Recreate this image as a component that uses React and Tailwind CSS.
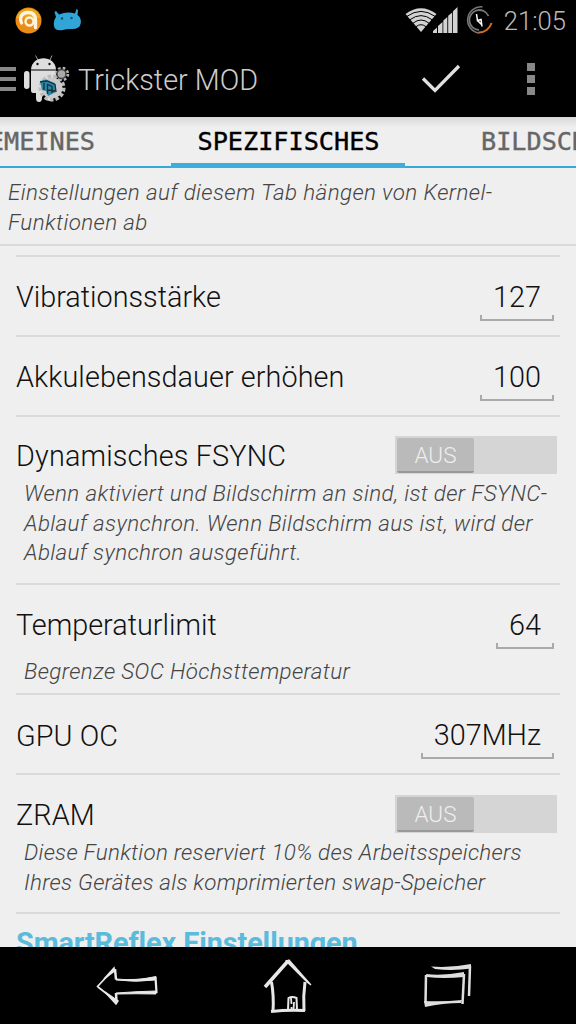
import React from "react";

const WifiIcon = () => (
  <svg width="32" height="26" viewBox="0 0 32 26">
    <path d="M0.500 7 Q16 -4.500 31.500 7 L16 25 Z" fill="#d2d2d2" />
    <path d="M2 9.300 Q16 -0.500 30 9.300 M5 12.700 Q16 4.500 27 12.700 M8 16.200 Q16 9.800 24 16.200 M11 19.700 Q16 15.700 21 19.700" fill="none" stroke="#000" strokeWidth="1" />
  </svg>
);

const SignalIcon = () => (
  <svg width="25" height="27" viewBox="0 0 25 27">
    <path d="M0 26 V24 L4 20.500 V26 Z M5 26 V19 L9.500 15 V26 Z M10.300 26 V13.500 L14.300 10 V26 Z M15.200 26 V8.800 L19.200 5.500 V26 Z M20 26 V4.300 L24.500 0 V26 Z" fill="#d2d2d2" />
  </svg>
);

const BatteryIcon = () => (
  <svg width="30" height="30" viewBox="0 0 30 30" fill="none">
    <path d="M18.500 2 A13 13 0 1 0 15 28" stroke="#777" strokeWidth="1.500" />
    <path d="M24.500 11 A10 10 0 1 0 15 25" stroke="#777" strokeWidth="1.800" />
    <path d="M14.500 27.500 A13 13 0 0 0 27.500 18" stroke="#d06e25" strokeWidth="2" />
    <path d="M12.500 9 L13.500 15.500 L17 14.500 L18 21.500 M13 15 L18 20" stroke="#fff" strokeWidth="1.500" />
  </svg>
);

const AvastIcon = () => (
  <svg width="27" height="27" viewBox="0 0 27 27" fill="none">
    <circle cx="13.500" cy="13.500" r="13" fill="#ea8c16" />
    <path d="M1 11 A13 13 0 0 1 26 11 Z" fill="#eba81c" />
    <path d="M6.500 16 C3.500 8 9 5.500 13 5.500 C18 5.500 20.500 8.500 20.500 13 V20.500" stroke="#fff4dc" strokeWidth="3.400" strokeLinecap="round" />
    <circle cx="14.500" cy="14.500" r="4" stroke="#fff4dc" strokeWidth="2.400" />
  </svg>
);

const DroidHead = () => (
  <svg width="30" height="22" viewBox="0 0 30 22">
    <path d="M3 8 L1.500 3 L3 2 L6 5.500 Q14 2 22 4.500 L23.500 0 L25 1 L24.500 6 Q28.500 9 27.800 14 Q27 20 19 20 Q14 19.500 10 21 Q2 22.500 1 17 Q0 12 3 8 Z" fill="#31a5d8" />
    <circle cx="9" cy="9.500" r="1.200" fill="#14506b" />
    <circle cx="18.500" cy="9" r="1.200" fill="#14506b" />
  </svg>
);

const AppIcon = () => (
  <svg width="46" height="48" viewBox="0 0 46 48">
    <path d="M14 5 L11.500 0.500 M26 5 L28 0.500" stroke="#999" strokeWidth="1" />
    <path d="M7 14.500 C8 -0.500 31 -0.500 32 14.500 Z" fill="#dedede" />
    <circle cx="13.500" cy="9" r="1.200" fill="#111" />
    <circle cx="25.500" cy="9" r="1.200" fill="#111" />
    <path d="M7 15.500 H32 V36 Q32 38 29 38 V43 Q29 46 26 46 Q22 46 22 43 V39 H18 V43 Q18 47 15 47 Q12 47 12 43 V38 H9 Q7 38 7 35 Z" fill="#dedede" />
    <rect x="0" y="16" width="5.500" height="18" rx="2.700" fill="#dedede" />
    <circle cx="28" cy="33" r="11.500" fill="none" stroke="#bdbdbd" strokeWidth="4" strokeDasharray="3.500 2" />
    <circle cx="28" cy="33" r="10.500" fill="#cbcbcb" />
    <path d="M16 26 L22 24.500 L31 28 L32 37 L24 41 L22 36 L18 35 Z" fill="#2b87a5" />
    <path d="M16 27 L23 26 L31 29.500 M20 28 V35 M23.500 39 V29.500 L28 31.500 V38 M24 35 L31 36 M31 29 L32 37" fill="none" stroke="#16323d" strokeWidth="1.300" />
    <circle cx="38" cy="19" r="5.500" fill="none" stroke="#b5b5b5" strokeWidth="3.500" strokeDasharray="2.400 1.920" />
    <circle cx="37.500" cy="19" r="4.500" fill="#aaa" stroke="#444" strokeWidth="1.500" />
  </svg>
);

const BackIcon = () => (
  <svg width="62" height="40" viewBox="0 0 62 40" fill="none" stroke="#e8e8e8">
    <path d="M1 21 L17 4 M2 21 L20 35" strokeWidth="1.800" />
    <path d="M8 13 L18 2 L18.500 5 Z M9 26 L22 35 L20 38 Z" fill="#e8e8e8" strokeWidth="1.500" />
    <path d="M19 3 L20 13.500 M20 27 L20.500 36" strokeWidth="2.500" />
    <path d="M20 13 Q40 15 60 10.500 L59 14 Q40 16.500 20 14 Z M20 27 Q40 25.500 60 25 L60 28 Q40 27.500 20 28 Z" fill="#e8e8e8" strokeWidth="1" />
    <path d="M59.500 11 L60.500 27" strokeWidth="2.300" />
  </svg>
);

const HomeIcon = () => (
  <svg width="50" height="56" viewBox="0 0 50 56" fill="none" stroke="#e8e8e8">
    <path d="M2 29 L25 3" strokeWidth="3.500" />
    <path d="M23 3 L26 2 L48 27 L44 24 Z" fill="#e8e8e8" strokeWidth="1.200" />
    <path d="M8.500 24 Q11 38 10 53" strokeWidth="3" />
    <path d="M42 24 Q40 38 41 53" strokeWidth="3" />
    <path d="M8 53.500 Q25 51.500 42 52.500" strokeWidth="3" />
    <path d="M25 52 L25.500 40 Q29 38 33.500 40 L34 52" strokeWidth="2" />
    <path d="M28 40 L28.500 46 M28.500 49 V52 M31 44 L30.500 52" strokeWidth="1.800" />
  </svg>
);

const RecentsIcon = () => (
  <svg width="50" height="44" viewBox="0 0 50 44" fill="none" stroke="#dedede">
    <path d="M3 10 Q20 12 41 8 L41 13 Q20 15 4 13 Z" fill="#dedede" stroke="none" />
    <path d="M3 11 L2.500 39" strokeWidth="2.500" />
    <path d="M41 10 L39.500 40" strokeWidth="2.500" />
    <path d="M1 37 Q20 38 39 36 L38 39 Q20 39 2 43 Z" fill="#dedede" stroke="none" />
    <path d="M8 2.500 Q28 4 48 0 L48 4.500 Q30 7 12 5 Z" fill="#dedede" stroke="none" />
    <path d="M47 2 L46 32" strokeWidth="2.500" />
  </svg>
);

const Toggle = () => (
  <div className="flex h-[38px] w-[162px] shrink-0 bg-[#d5d5d5] p-[2px]">
    <div className="flex h-[35px] w-[77px] items-center justify-center rounded-[2px] border-b-2 border-[#999] bg-[#bababa] pt-[3px] text-[22.4px] font-light text-[#eee]">
      AUS
    </div>
  </div>
);

const NumberField = ({ value }) => (
  <div className="flex flex-col pt-[9px] tracking-normal">
    <span className="px-[13px] text-[28.8px] leading-[34px] font-light">{value}</span>
    <div className="mt-px h-[6px] border-x-2 border-b-2 border-[#aaa]" />
  </div>
);

const Hint = ({ children }) => (
  <p className="pl-2 text-[22.4px] leading-[29.7px] font-light whitespace-nowrap text-[#444] italic">
    {children}
  </p>
);

const App = () => {
  return (
    <div className="flex h-[1024px] w-[576px] flex-col overflow-hidden bg-[#efefef] font-['Roboto',sans-serif] text-[#111]">
      {/* status bar */}
      <div className="flex h-[40px] shrink-0 items-center bg-black pr-[10px] pl-[15px]">
        <AvastIcon />
        <div className="ml-[11px]">
          <DroidHead />
        </div>
        <div className="ml-auto flex items-center">
          <WifiIcon />
          <div className="-ml-[4px]">
            <SignalIcon />
          </div>
          <div className="ml-[6px]">
            <BatteryIcon />
          </div>
          <span className="ml-[10px] pt-[2px] text-[25.6px] leading-[38px] font-light text-[#bbb]">21:05</span>
        </div>
      </div>

      {/* action bar */}
      <header className="flex h-[77px] shrink-0 items-center bg-black">
        <div className="flex w-[16px] flex-col gap-[6px] pt-px">
          <div className="h-[4px] bg-[#888]" />
          <div className="h-[4px] bg-[#888]" />
          <div className="h-[4px] bg-[#888]" />
        </div>
        <div className="ml-[8px]">
          <AppIcon />
        </div>
        <h1 className="ml-[8px] pt-[4px] text-[28.8px] font-light text-[#ccc]">Trickster MOD</h1>
        <svg className="ml-auto" width="40" height="30" viewBox="0 0 40 30">
          <path d="M2 14.500 L14 26.500 L38 2" fill="none" stroke="#e0e0e0" strokeWidth="3.300" />
        </svg>
        <div className="mr-[41px] ml-[66px] flex flex-col gap-[4px]">
          <div className="size-[8px] bg-[#888]" />
          <div className="size-[8px] bg-[#888]" />
          <div className="size-[8px] bg-[#888]" />
        </div>
      </header>

      {/* tabs */}
      <nav className="h-[51px] shrink-0 bg-linear-to-b from-[#d8d8d8] via-[#efefef] via-20% to-[#efefef]">
        <div className="flex h-full justify-between border-b-2 border-[#37a9d6] font-['DejaVu_Sans_Mono',monospace] text-[25.2px] leading-[50px] text-[#666] [-webkit-text-stroke:0.4px_currentColor]">
          <div className="flex w-[171px] justify-end overflow-hidden pr-[76px]">
            <span>ALLGEMEINES</span>
          </div>
          <div className="h-[51px] w-[234px] border-b-5 border-[#3caedb] pl-px text-center text-black">SPEZIFISCHES</div>
          <div className="w-[171px] overflow-hidden pl-[76px]">BILDSCHIRM</div>
        </div>
      </nav>

      <main className="min-h-0 flex-1 overflow-hidden">
        <p className="h-[78px] border-b-2 border-[#dadada] pt-[9px] pl-[8px] text-[22.4px] leading-[30px] font-light tracking-[0.38px] text-[#444] italic">
          Einstellungen auf diesem Tab hängen von Kernel-
          <br />
          Funktionen ab
        </p>
        <div className="mx-4 mt-[9px] border-t-2 border-[#dadada] text-[28.8px] font-light tracking-[0.08px]">
          <div className="flex h-[80px] items-center justify-between border-b-2 border-[#dadada] pr-[6px]">
            <span className="pt-[4px] tracking-normal">Vibrationsstärke</span>
            <NumberField value="127" />
          </div>
          <div className="flex h-[80px] items-center justify-between border-b-2 border-[#dadada] pr-[6px]">
            <span className="pt-[4px]">Akkulebensdauer erhöhen</span>
            <NumberField value="100" />
          </div>
          <div className="h-[168px] border-b-2 border-[#dadada] pt-[19px]">
            <div className="flex h-[43px] justify-between pr-[3px]">
              <span className="leading-[41px] tracking-[0.17px]">Dynamisches FSYNC</span>
              <Toggle />
            </div>
            <div className="tracking-[0.35px]">
              <Hint>
                Wenn aktiviert und Bildschirm an sind, ist der FSYNC-
                <br />
                Ablauf asynchron. Wenn Bildschirm aus ist, wird der
                <br />
                Ablauf synchron ausgeführt.
              </Hint>
            </div>
          </div>
          <div className="h-[110px] border-b-2 border-[#dadada]">
            <div className="flex h-[72px] items-center justify-between pt-[6px] pr-[6px]">
              <span className="pt-[4px] tracking-normal">Temperaturlimit</span>
              <NumberField value="64" />
            </div>
            <div className="tracking-[0.38px]">
              <Hint>Begrenze SOC Höchsttemperatur</Hint>
            </div>
          </div>
          <div className="flex h-[80px] items-center justify-between border-b-2 border-[#dadada] pr-[6px]">
            <span className="pt-[5px]">GPU OC</span>
            <NumberField value="307MHz" />
          </div>
          <div className="h-[139px] border-b-2 border-[#dadada] pt-[20px]">
            <div className="flex h-[43px] justify-between pr-[3px]">
              <span className="leading-[41px]">ZRAM</span>
              <Toggle />
            </div>
            <div className="tracking-[0.26px]">
              <Hint>
                Diese Funktion reserviert 10% des Arbeitsspeichers
                <br />
                Ihres Gerätes als komprimierten swap-Speicher
              </Hint>
            </div>
          </div>
          <h2 className="pt-[8px] text-[28.8px] font-bold tracking-[-0.1px] text-[#5bbbdc]">SmartReflex Einstellungen</h2>
        </div>
      </main>

      {/* navigation bar */}
      <footer className="flex h-[77px] shrink-0 items-center bg-black">
        <div className="ml-[96px]">
          <BackIcon />
        </div>
        <div className="ml-[105px]">
          <HomeIcon />
        </div>
        <div className="ml-[110px]">
          <RecentsIcon />
        </div>
      </footer>
    </div>
  );
};

export default App;
